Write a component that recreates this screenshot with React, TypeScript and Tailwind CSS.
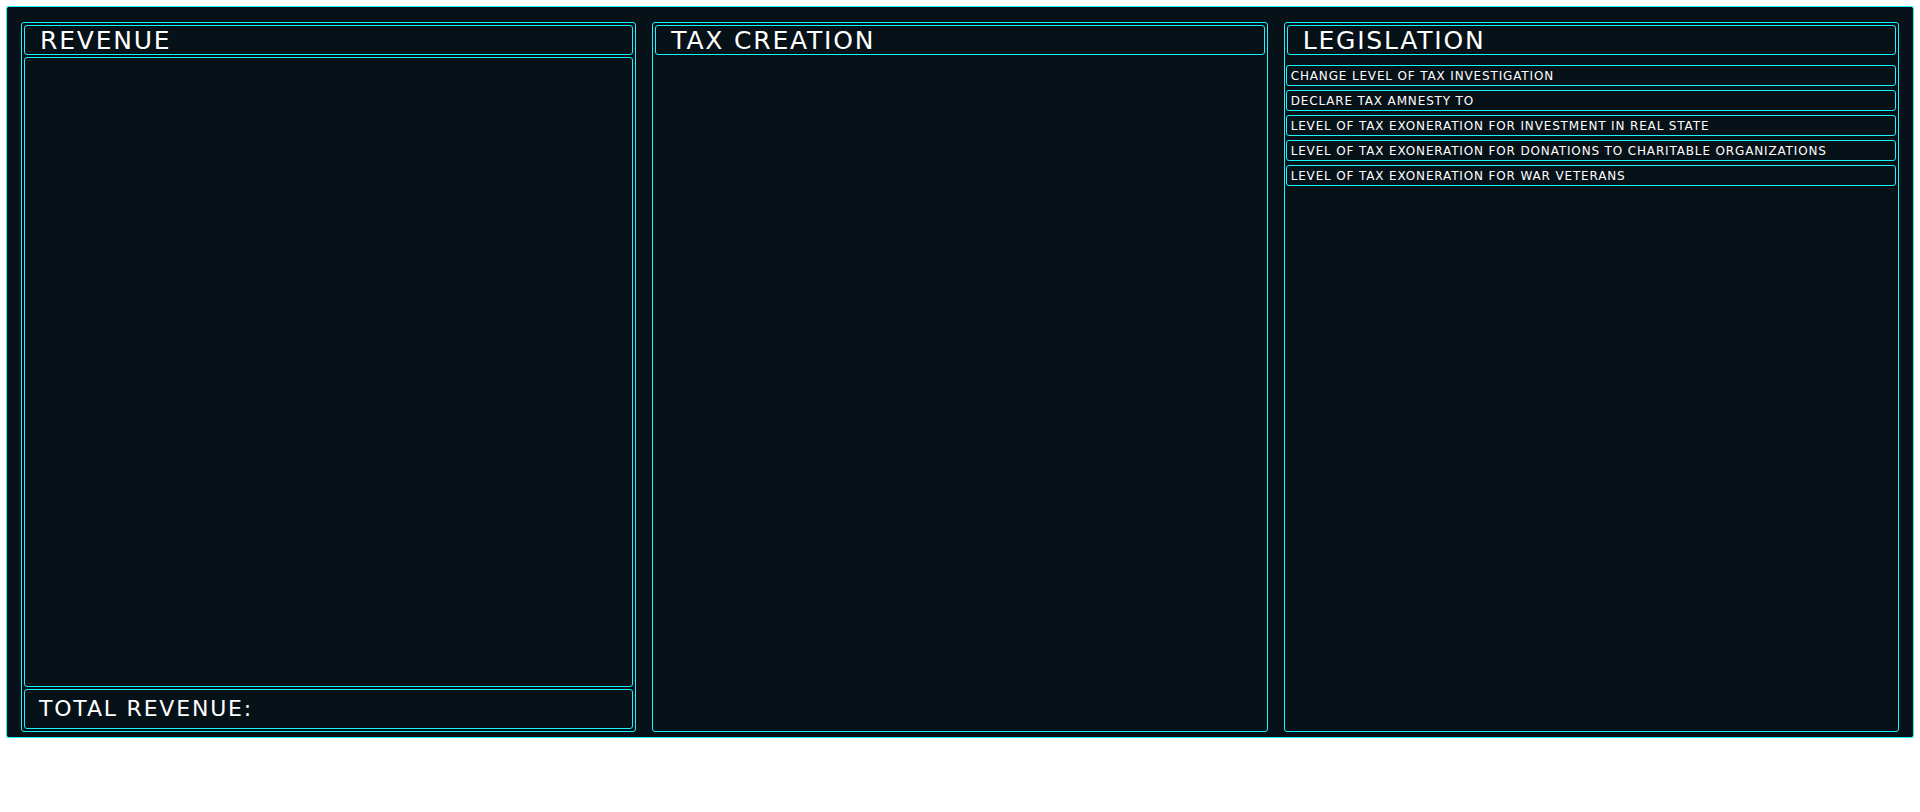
const items = [
  'CHANGE LEVEL OF TAX INVESTIGATION',
  'DECLARE TAX AMNESTY TO',
  'LEVEL OF TAX EXONERATION FOR INVESTMENT IN REAL STATE',
  'LEVEL OF TAX EXONERATION FOR DONATIONS TO CHARITABLE ORGANIZATIONS',
  'LEVEL OF TAX EXONERATION FOR WAR VETERANS',
]

const box = 'border border-[#1cf2fb] rounded-[3px]'

function Header({ title }: { title: string }) {
  return (
    <div className={`${box} h-[30px] flex items-center pl-[15px] shrink-0`}>
      <span className="text-[25px] leading-none tracking-[1.8px] text-white">{title}</span>
    </div>
  )
}

export default function App() {
  return (
    <div className="bg-white min-h-screen pt-[6px] px-[6px]" style={{ fontFamily: '"DejaVu Sans", sans-serif' }}>
      <div className={`${box} bg-[#071118] h-[732px] pt-[15px] px-[14px] pb-[5px] grid grid-cols-3 gap-[16px]`}>
        <section className={`${box} p-[2px] flex flex-col gap-[2px]`}>
          <Header title="REVENUE" />
          <div className={`${box} flex-1`} />
          <div className={`${box} h-[40px] flex items-center pl-[14px] shrink-0`}>
            <span className="text-[22px] leading-none tracking-[1.8px] text-white">TOTAL REVENUE:</span>
          </div>
        </section>

        <section className={`${box} p-[2px] flex flex-col`}>
          <Header title="TAX CREATION" />
        </section>

        <section className={`${box} p-[2px] flex flex-col`}>
          <Header title="LEGISLATION" />
          <div className="mt-[10px] flex flex-col gap-[4px] -ml-[1px]">
            {items.map((t) => (
              <div key={t} className={`${box} h-[21px] flex items-center pl-[4px]`}>
                <span className="text-[12px] leading-none text-white tracking-[0.85px]">{t}</span>
              </div>
            ))}
          </div>
        </section>
      </div>
    </div>
  )
}
